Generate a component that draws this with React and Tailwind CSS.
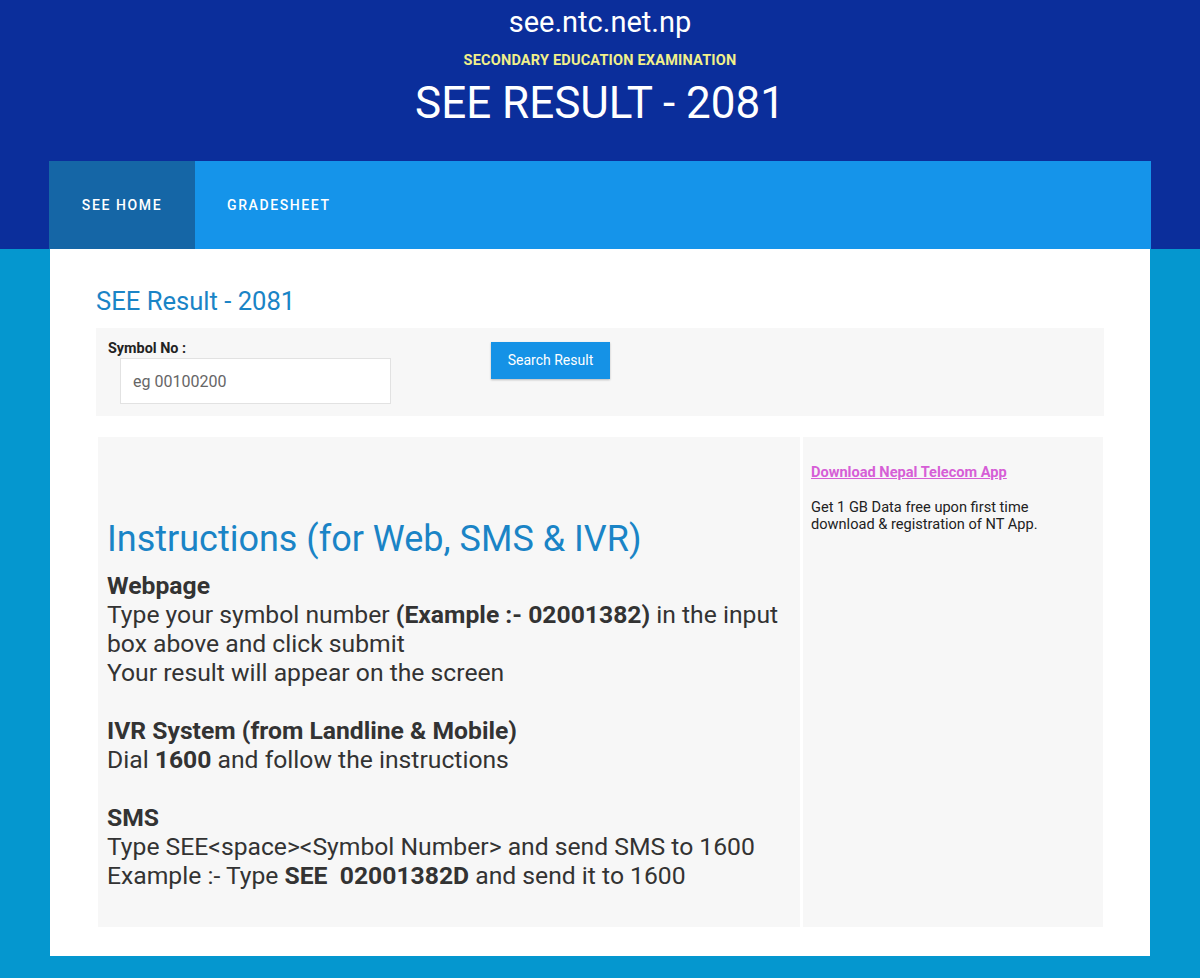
export default function App() {
  return (
    <div className="min-h-[978px] bg-[#0597cf] font-['Roboto',_'Liberation_Sans',_sans-serif]">
      <header className="bg-[#0b2e9b] h-[249px] flex flex-col items-center">
        <div className="text-white text-[29px] leading-none mt-[8px]">see.ntc.net.np</div>
        <div className="text-[#f1f08a] text-[14.5px] tracking-[0.2px] font-bold leading-none mt-[17px]">SECONDARY EDUCATION EXAMINATION</div>
        <div className="text-white text-[44px] leading-none mt-[12px]">SEE RESULT - 2081</div>
        <nav className="mt-auto w-[1102px] h-[88px] bg-[#1594ea] flex">
          <a className="w-[146px] bg-[#1566a6] flex items-center justify-center text-white text-[14px] font-medium tracking-[1.6px]">SEE HOME</a>
          <a className="px-[32px] flex items-center text-white text-[14px] font-medium tracking-[1.6px]">GRADESHEET</a>
        </nav>
      </header>

      <main className="w-[1100px] mx-auto bg-white px-[46px] pt-[38px] pb-[29px]">
        <h2 className="text-[#1a84c6] text-[25.6px] leading-[29px]">SEE Result - 2081</h2>

        <div className="mt-[12px] bg-[#f7f7f7] h-[88px] flex pl-[12px] pt-[13px]">
          <div>
            <label className="block text-[14.4px] font-bold text-[#222] leading-[16px]">Symbol No :</label>
            <input
              placeholder="eg 00100200"
              className="ml-[12px] mt-[1px] w-[271px] h-[46px] bg-white border border-[#e2e2e2] px-[12px] text-[16px] placeholder-[#666] outline-none"
            />
          </div>
          <button className="ml-[100px] mt-[1px] w-[119px] h-[37px] bg-[#1592e6] text-white text-[14px] shadow-[0_1px_2px_rgba(0,0,0,0.25)]">
            Search Result
          </button>
        </div>

        <div className="mt-[21px] ml-[2px] mr-[1px] flex gap-[3px] h-[490px]">
          <div className="w-[702px] bg-[#f7f7f7] pl-[9px] pt-[81px] text-[#333] text-[24.7px] leading-[29px]">
            <h1 className="text-[#1a84c6] text-[36px] leading-[42px] mb-[11px]">Instructions (for Web, SMS &amp; IVR)</h1>
            <b>Webpage</b>
            <br />
            Type your symbol number <b>(Example :- 02001382)</b> in the input box above and click submit
            <br />
            Your result will appear on the screen
            <br />
            <br />
            <b>IVR System (from Landline &amp; Mobile)</b>
            <br />
            Dial <b>1600</b> and follow the instructions
            <br />
            <br />
            <b>SMS</b>
            <br />
            Type SEE&lt;space&gt;&lt;Symbol Number&gt; and send SMS to 1600
            <br />
            Example :- Type <b>SEE&nbsp; 02001382D</b> and send it to 1600
          </div>
          <div className="flex-1 bg-[#f7f7f7] px-[8px] pt-[25px] text-[14.6px] text-[#222]">
            <a className="font-bold text-[#d65ed6] underline leading-[17px]">Download Nepal Telecom App</a>
            <p className="mt-[15px] leading-[17px]">
              Get 1 GB Data free upon first time
              <br />
              download &amp; registration of NT App.
            </p>
          </div>
        </div>
      </main>
    </div>
  );
}
